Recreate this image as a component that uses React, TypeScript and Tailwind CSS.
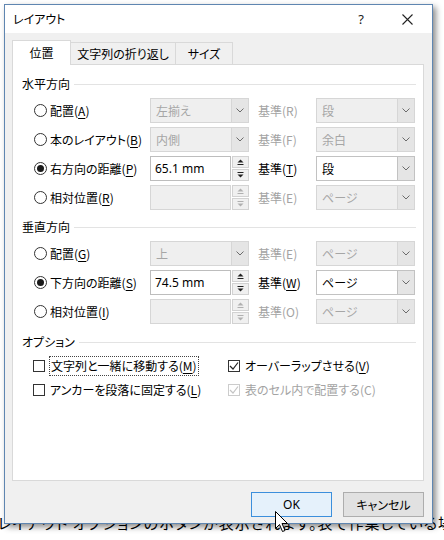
import React from "react";

const FONT =
  "font-['Noto_Sans_CJK_JP','Noto_Sans',sans-serif] [font-feature-settings:'palt']";

function Key({ t, k, off }: { t: string; k: string; off?: boolean }) {
  return (
    <span className={`whitespace-nowrap ${off ? "text-[#a3a3a3]" : "text-black"}`}>
      {t}(
      {off ? k : <span className="underline underline-offset-[2px]">{k}</span>})
    </span>
  );
}

function Chevron() {
  return (
    <svg width="8" height="5" viewBox="0 0 8 5">
      <path d="M0.5 0.5 L4 4 L7.5 0.5" fill="none" stroke="#6b6b6b" strokeWidth="1" />
    </svg>
  );
}

function Radio({ checked }: { checked?: boolean }) {
  return (
    <span className="flex h-[13px] w-[13px] shrink-0 items-center justify-center rounded-full border border-[#333] bg-white">
      {checked && <span className="h-[7px] w-[7px] rounded-full bg-[#1a1a1a]" />}
    </span>
  );
}

function Check({ checked, off }: { checked?: boolean; off?: boolean }) {
  return (
    <span
      className={`flex h-[12px] w-[12px] shrink-0 items-center justify-center border bg-white ${
        off ? "border-[#cccccc]" : "border-[#333]"
      }`}
    >
      {checked && (
        <svg width="10" height="10" viewBox="0 0 10 10">
          <path
            d="M1 5 L4 8 L9 1.5"
            fill="none"
            stroke={off ? "#c4c4c4" : "#222"}
            strokeWidth="1.2"
          />
        </svg>
      )}
    </span>
  );
}

function Select({ value, off }: { value: string; off?: boolean }) {
  return (
    <div
      className={`flex h-[25px] w-[99px] shrink-0 border ${
        off ? "border-[#d6d6d6] bg-[#efefef] text-[#a6a6a6]" : "border-[#c2c2c2] bg-white text-black"
      }`}
    >
      <div className="flex flex-1 items-center pl-[5px]">{value}</div>
      <div
        className={`flex w-[17px] items-center justify-center border-l bg-[#e5e5e5] ${
          off ? "border-[#d6d6d6]" : "border-[#c2c2c2]"
        }`}
      >
        <Chevron />
      </div>
    </div>
  );
}

function Spin({ value, off }: { value?: string; off?: boolean }) {
  return (
    <div className="flex h-[25px] w-[99px] shrink-0">
      <div
        className={`flex flex-1 items-center border pl-[4px] font-['Noto_Sans',sans-serif] ${
          off ? "border-[#d6d6d6] bg-[#efefef]" : "border-[#bdbdbd] bg-white"
        }`}
      >
        {value}
      </div>
      <div className="ml-px flex w-[17px] flex-col gap-px">
        <div className="flex flex-1 flex-col items-center justify-center gap-[1px] border border-[#d2d2d2] bg-[#f0f0f0]">
          <svg width="7" height="6" viewBox="0 0 7 6">
            <path d="M0.5 3.5 L3.5 0.5 L6.5 3.5 Z" fill={off ? "#b0b0b0" : "#222"} />
            <path d="M0.5 5.5 H6.5" stroke={off ? "#b0b0b0" : "#222"} strokeWidth="1" />
          </svg>
        </div>
        <div className="flex flex-1 flex-col items-center justify-center border border-[#d2d2d2] bg-[#f0f0f0]">
          <svg width="7" height="6" viewBox="0 0 7 6">
            <path d="M0.5 0.5 H6.5" stroke={off ? "#b0b0b0" : "#222"} strokeWidth="1" />
            <path d="M0.5 2.5 L3.5 5.5 L6.5 2.5 Z" fill={off ? "#b0b0b0" : "#222"} />
          </svg>
        </div>
      </div>
    </div>
  );
}

function Heading({ text, className = "" }: { text: string; className?: string }) {
  return (
    <div className={`flex h-[16px] items-center ${className}`}>
      <span>{text}</span>
      <div className="ml-[4px] h-px flex-1 bg-[#e3e3e3]" />
    </div>
  );
}

function Row({
  checked,
  label,
  k,
  field,
  basis,
  right,
}: {
  checked?: boolean;
  label: string;
  k: string;
  field: React.ReactNode;
  basis: React.ReactNode;
  right: React.ReactNode;
}) {
  return (
    <div className="flex h-[25px] items-center">
      <div className="flex w-[116px] items-center gap-[3px]">
        <Radio checked={checked} />
        <Key t={label} k={k} />
      </div>
      {field}
      <div className="w-[67px] pl-[9px]">{basis}</div>
      {right}
    </div>
  );
}

export default function App() {
  return (
    <div className={`relative h-[540px] w-[444px] overflow-hidden bg-white ${FONT}`}>
      {/* document behind the dialog */}
      <div className="absolute left-[-2px] top-[513px] whitespace-nowrap text-[15px] leading-[20px] tracking-[1px] text-black">
        レイアウト オプションのボタンが表示されます。表で作業している場合
      </div>

      {/* dialog window */}
      <div className="absolute left-[4px] top-[4px] flex h-[520px] w-[429px] flex-col border border-[#5f86b1] bg-[#f0f0f0] text-[12px] leading-[16px] text-black shadow-[3px_3px_6px_rgba(0,0,0,0.45)]">
        {/* title bar */}
        <div className="flex h-[28px] shrink-0 items-center bg-white pl-[8px] pr-[2px]">
          <span className="text-[12px]">レイアウト</span>
          <div className="ml-auto flex h-full">
            <div className="flex w-[46px] items-center justify-center font-['Noto_Sans',sans-serif] text-[13px] text-[#222]">
              ?
            </div>
            <div className="flex w-[46px] items-center justify-center">
              <svg width="11" height="11" viewBox="0 0 11 11">
                <path d="M0.5 0.5 L10.5 10.5 M10.5 0.5 L0.5 10.5" stroke="#222" strokeWidth="1.1" />
              </svg>
            </div>
          </div>
        </div>

        {/* body */}
        <div className="flex flex-1 flex-col pl-[7px] pr-[8px] pt-[7px]">
          {/* tabs */}
          <div className="relative z-10 -mb-px flex h-[25px] items-end">
            <div className="flex h-[25px] w-[59px] items-center justify-center border border-b-0 border-[#d9d9d9] bg-white">
              位置
            </div>
            <div className="flex h-[23px] w-[105px] items-center justify-center border border-l-0 border-[#d9d9d9] bg-[#f0f0f0]">
              文字列の折り返し
            </div>
            <div className="flex h-[23px] w-[57px] items-center justify-center border border-l-0 border-[#d9d9d9] bg-[#f0f0f0]">
              サイズ
            </div>
          </div>

          {/* panel */}
          <div className="flex h-[417px] flex-col border border-[#d9d9d9] bg-white pl-[9px] pr-[7px] pt-[11px]">
            <Heading text="水平方向" />
            <div className="mt-[6px] flex flex-col gap-[4px] pl-[12px]">
              <Row
                label="配置"
                k="A"
                field={<Select value="左揃え" off />}
                basis={<Key t="基準" k="R" off />}
                right={<Select value="段" off />}
              />
              <Row
                label="本のレイアウト"
                k="B"
                field={<Select value="内側" off />}
                basis={<Key t="基準" k="F" off />}
                right={<Select value="余白" off />}
              />
              <Row
                checked
                label="右方向の距離"
                k="P"
                field={<Spin value="65.1 mm" />}
                basis={<Key t="基準" k="T" />}
                right={<Select value="段" />}
              />
              <Row
                label="相対位置"
                k="R"
                field={<Spin off />}
                basis={<Key t="基準" k="E" off />}
                right={<Select value="ページ" off />}
              />
            </div>

            <Heading text="垂直方向" className="mt-[9px]" />
            <div className="mt-[6px] flex flex-col gap-[4px] pl-[12px]">
              <Row
                label="配置"
                k="G"
                field={<Select value="上" off />}
                basis={<Key t="基準" k="E" off />}
                right={<Select value="ページ" off />}
              />
              <Row
                checked
                label="下方向の距離"
                k="S"
                field={<Spin value="74.5 mm" />}
                basis={<Key t="基準" k="W" />}
                right={<Select value="ページ" />}
              />
              <Row
                label="相対位置"
                k="I"
                field={<Spin off />}
                basis={<Key t="基準" k="O" off />}
                right={<Select value="ページ" off />}
              />
            </div>

            <Heading text="オプション" className="mt-[10px]" />
            <div className="mt-[6px] flex flex-col gap-[4px] pl-[11px]">
              <div className="flex h-[20px] items-center">
                <div className="flex w-[195px] items-center gap-[4px]">
                  <Check />
                  <span className="border border-dotted border-[#444] px-[1px] leading-[18px]">
                    <Key t="文字列と一緒に移動する" k="M" />
                  </span>
                </div>
                <div className="flex items-center gap-[5px]">
                  <Check checked />
                  <Key t="オーバーラップさせる" k="V" />
                </div>
              </div>
              <div className="flex h-[20px] items-center">
                <div className="flex w-[195px] items-center gap-[5px]">
                  <Check />
                  <Key t="アンカーを段落に固定する" k="L" />
                </div>
                <div className="flex items-center gap-[5px]">
                  <Check checked off />
                  <Key t="表のセル内で配置する" k="C" off />
                </div>
              </div>
            </div>
          </div>

          {/* buttons */}
          <div className="mt-[11px] flex justify-end gap-[11px]">
            <button className="flex h-[25px] w-[81px] items-center justify-center border border-[#3c8fdc] bg-[#e5f1fb] font-['Noto_Sans',sans-serif] text-[12px]">
              OK
            </button>
            <button className="flex h-[25px] w-[81px] items-center justify-center border border-[#adadad] bg-[#e1e1e1] text-[12px]">
              キャンセル
            </button>
          </div>
        </div>
      </div>

      {/* mouse pointer */}
      <svg className="absolute left-[275px] top-[511px]" width="14" height="22" viewBox="0 0 14 22">
        <path
          d="M0.5 0.5 V17.5 L4.5 13.5 L7.5 20.5 L10 19.5 L7 12.5 H12.5 Z"
          fill="white"
          stroke="black"
          strokeWidth="1"
        />
      </svg>
    </div>
  );
}
